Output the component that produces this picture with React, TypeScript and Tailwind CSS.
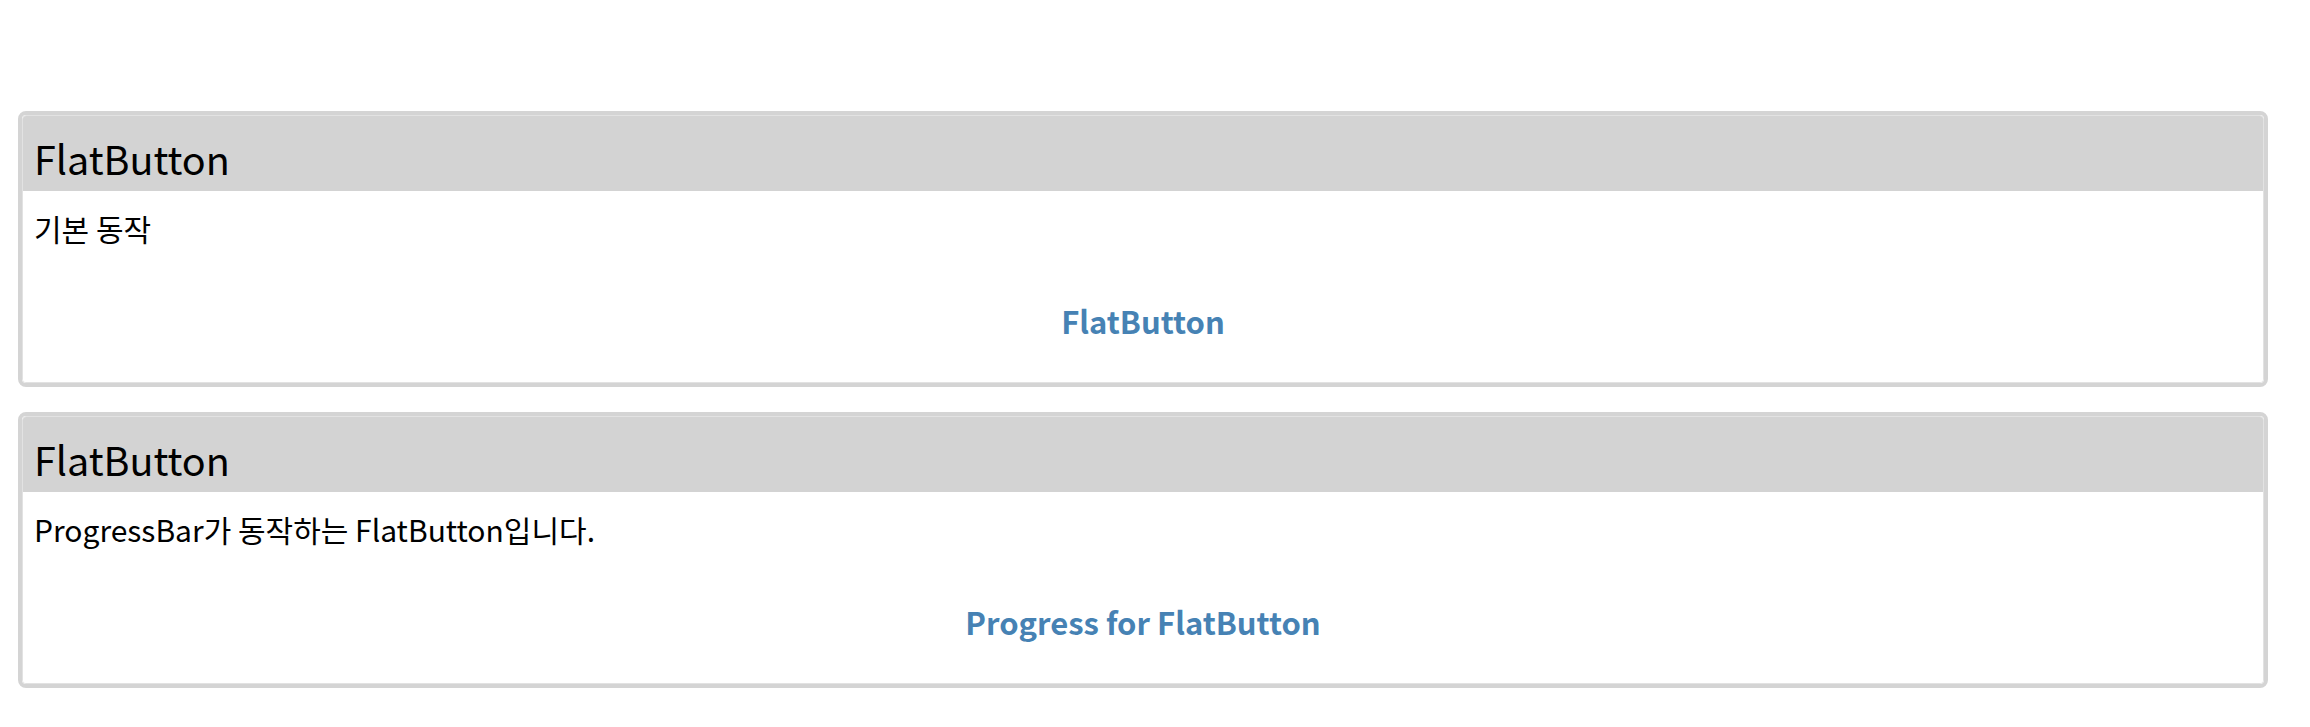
import React from 'react';

type Demo = {
  title: string;
  description: string;
  label: string;
};

const demos: Demo[] = [
  { title: 'FlatButton', description: '기본 동작', label: 'FlatButton' },
  {
    title: 'FlatButton',
    description: 'ProgressBar가 동작하는 FlatButton입니다.',
    label: 'Progress for FlatButton',
  },
];

function DemoCard({ demo }: { demo: Demo }) {
  return (
    <div className="border-[4px] border-[#d4d4d4] rounded-[8px]">
      <div className="border border-[#e2e2e2] rounded-[4px] overflow-hidden">
        {/* header */}
        <div className="h-[75px] bg-[#d3d3d3] px-[11px] pt-[12px]">
          <h3 className="text-[39.5px] leading-[60px] font-normal text-black">{demo.title}</h3>
        </div>

        {/* body */}
        <div className="bg-white px-[11px] pt-[17px] pb-[41px]">
          <p className="text-[30px] leading-[40px] text-black">{demo.description}</p>
          <div className="mt-[53px] flex justify-center">
            <button className="text-[31px] leading-[40px] font-bold text-[#4682b4]">
              {demo.label}
            </button>
          </div>
        </div>
      </div>
    </div>
  );
}

export default function App() {
  return (
    <div
      className="min-h-[727px] bg-white pt-[111px] pl-[18px] pr-[42px]"
      style={{ fontFamily: '"Noto Sans CJK KR", "Noto Sans", sans-serif' }}
    >
      <div className="flex flex-col gap-[25px]">
        {demos.map((demo, i) => (
          <DemoCard key={i} demo={demo} />
        ))}
      </div>
    </div>
  );
}
